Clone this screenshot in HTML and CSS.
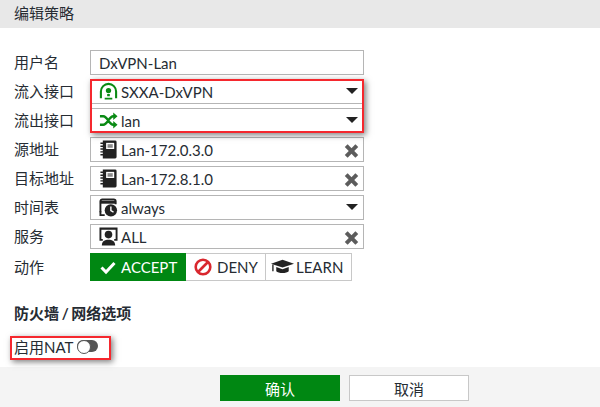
FILE: index.html
```html
<!DOCTYPE html>
<html lang="zh">
<head>
<meta charset="utf-8">
<title>编辑策略</title>
<link rel="stylesheet" href="styles.css">
</head>
<body>
<div class="page">
  <header class="title">编辑策略</header>
  <main class="body">
    <div class="form">
      <div class="row">
        <label class="lbl">用户名</label>
        <div class="field"><span class="val plain">DxVPN-Lan</span></div>
      </div>
      <div class="row">
        <label class="lbl">流入接口</label>
        <div class="field">
          <svg class="ico" viewBox="0 0 20 20"><path d="M2 17V10a8 8 0 0 1 16 0v7" fill="none" stroke="#0a8a14" stroke-width="2.200"/><circle cx="10" cy="9" r="2.800" fill="#0a8a14"/><path d="M8.600 12.500h2.800v2.600H8.600zM6 16.500h8v2H6z" fill="#0a8a14"/></svg>
          <span class="val">SXXA-DxVPN</span><span class="caret"></span>
        </div>
      </div>
      <div class="row">
        <label class="lbl">流出接口</label>
        <div class="field">
          <svg class="ico" viewBox="0 0 20 20"><path d="M1 5.500h3.500c4.500 0 6 9 10.500 9H16M1 14.500h3.500c4.500 0 6-9 10.500-9H16" fill="none" stroke="#0a8a14" stroke-width="2.600"/><path d="M15 1.500l4.500 4-4.500 4zM15 10.500l4.500 4-4.500 4z" fill="#0a8a14"/></svg>
          <span class="val">lan</span><span class="caret"></span>
        </div>
      </div>
      <div class="row">
        <label class="lbl">源地址</label>
        <div class="field">
          <svg class="ico" viewBox="0 0 20 20"><path d="M4 .5h13A1.500 1.500 0 0 1 18.500 2v16a1.500 1.500 0 0 1-1.500 1.500H4z" fill="#222"/><path d="M1.500 3.500h3.500M1.500 6.500h3.500M1.500 9.500h3.500M1.500 12.500h3.500M1.500 15.500h3.500" stroke="#222" stroke-width="1.500"/><path d="M7.500 3h8.500v6.500H7.500z" fill="#fff"/><path d="M9 5.300h5.500M9 7.300h5.500" stroke="#222"/></svg>
          <span class="val">Lan-172.0.3.0</span><span class="x"></span>
        </div>
      </div>
      <div class="row">
        <label class="lbl">目标地址</label>
        <div class="field">
          <svg class="ico" viewBox="0 0 20 20"><path d="M4 .5h13A1.500 1.500 0 0 1 18.500 2v16a1.500 1.500 0 0 1-1.500 1.500H4z" fill="#222"/><path d="M1.500 3.500h3.500M1.500 6.500h3.500M1.500 9.500h3.500M1.500 12.500h3.500M1.500 15.500h3.500" stroke="#222" stroke-width="1.500"/><path d="M7.500 3h8.500v6.500H7.500z" fill="#fff"/><path d="M9 5.300h5.500M9 7.300h5.500" stroke="#222"/></svg>
          <span class="val">Lan-172.8.1.0</span><span class="x"></span>
        </div>
      </div>
      <div class="row">
        <label class="lbl">时间表</label>
        <div class="field">
          <svg class="ico" viewBox="0 0 20 20"><path d="M1.500 15V3.500a2 2 0 0 1 2-2h12a2 2 0 0 1 2 2v3" fill="none" stroke="#222" stroke-width="2"/><path d="M1 3h17v3H1z" fill="#222"/><path d="M1.500 14v4H6" fill="none" stroke="#222" stroke-width="2"/><circle cx="12.500" cy="13" r="6.500" fill="#222"/><path d="M12.500 9v4.300l2.800 1.500" fill="none" stroke="#fff" stroke-width="1.500"/></svg>
          <span class="val">always</span><span class="caret"></span>
        </div>
      </div>
      <div class="row">
        <label class="lbl">服务</label>
        <div class="field">
          <svg class="ico" viewBox="0 0 20 20"><path d="M.5 .5h19v14h-3.500v-2h1.500V3h-15v9.500H4v2H.5z" fill="#222"/><circle cx="10" cy="8" r="4" fill="#222"/><path d="M3 19.500c0-4.500 3-6 7-6s7 1.500 7 6z" fill="#222"/></svg>
          <span class="val">ALL</span><span class="x"></span>
        </div>
      </div>
      <div class="row action-row">
        <label class="lbl">动作</label>
        <div class="seg">
          <span class="opt on">
            <svg class="mini" viewBox="0 0 16 16"><path d="M1.500 8.500l4.500 4.500 8.500-9" fill="none" stroke="#fff" stroke-width="3"/></svg>ACCEPT</span>
          <span class="opt deny">
            <svg class="mini" viewBox="0 0 16 16"><circle cx="8" cy="8" r="6.500" fill="none" stroke="#d9272e" stroke-width="2.300"/><path d="M3.800 12.200l8.400-8.400" stroke="#d9272e" stroke-width="2.300"/></svg>DENY</span>
          <span class="opt learn">
            <svg class="cap" viewBox="0 0 24 16"><path d="M0 4.500L12 .5l12 4-12 4z" fill="#222"/><path d="M5.500 8v4.500c2 2.500 11 2.500 13 0V8l-6.500 2.300z" fill="#222"/><path d="M2 5.500v7" stroke="#222" stroke-width="1.400"/></svg>LEARN</span>
        </div>
      </div>
    </div>
    <h2 class="section">防火墙 / 网络选项</h2>
    <div class="nat">
      <span>启用NAT</span><span class="toggle"></span>
    </div>
  </main>
  <footer class="foot">
    <button class="btn primary">确认</button>
    <button class="btn">取消</button>
  </footer>
  <div class="mark mark-if"></div>
  <div class="mark mark-nat"></div>
</div>
</body>
</html>
```
FILE: styles.css
```css
* { box-sizing: border-box; }
html, body { margin: 0; padding: 0; }
body {
  font-family: Lato, "Noto Sans CJK SC", sans-serif;
  font-size: 15px;
  color: #262c33;
  background: #fff;
}
.page { position: relative; width: 600px; height: 407px; overflow: hidden; display: flex; flex-direction: column; }
.title { height: 28px; background: #e8e8e8; padding-left: 14px; line-height: 27px; flex: none; }
.body { flex: 1; padding: 22px 0 0 14px; }
.form { display: flex; flex-direction: column; gap: 4px; }
.row { display: flex; align-items: center; height: 25px; }
.lbl { width: 76px; flex: none; line-height: 25px; height: 25px; }
.field {
  width: 274px; height: 25px; border: 1px solid #b5b5b5; background: #fff;
  display: flex; align-items: center; padding-left: 8px; position: relative;
}
.val { line-height: 22px; flex: 1; margin-left: 3px; }
.val.plain { margin-left: 0; }
.ico { width: 19px; height: 19px; flex: none; }
.caret {
  width: 0; height: 0; margin-right: 5px; margin-top: -1px;
  border-left: 6.500px solid transparent; border-right: 6.500px solid transparent; border-top: 6px solid #222;
}
.x { width: 13px; height: 13px; margin-right: 5px; margin-top: 3px; position: relative; }
.x::before, .x::after {
  content: ""; position: absolute; left: -1px; top: 4.500px; width: 15px; height: 4px; background: #5c5c5c;
}
.x::before { transform: rotate(45deg); }
.x::after { transform: rotate(-45deg); }
.action-row { height: 28px; }
.seg { display: flex; height: 28px; }
.opt {
  display: flex; align-items: center; height: 28px;
  border: 1px solid #c8c8c8; border-left: 0; background: #fff;
}
.on { width: 96px; background: #008712; color: #fff; border: 0; padding-left: 10px; }
.deny { width: 80px; padding-left: 8px; }
.deny .mini { width: 18px; height: 18px; margin-right: 5px; }
.learn { width: 86px; padding-left: 5px; }
.mini { width: 16px; height: 16px; margin-right: 5px; flex: none; }
.cap { width: 23px; height: 16px; margin-right: 2px; flex: none; }
.section { margin: 22px 0 0; font-size: 15px; font-weight: 700; line-height: 20px; word-spacing: -1px; }
.nat { display: flex; align-items: center; margin-top: 13px; height: 20px; }
.toggle {
  width: 21px; height: 12px; border-radius: 6px; background: #555; margin-left: 4px; position: relative;
}
.toggle::before {
  content: ""; position: absolute; left: 0; top: 0; width: 12px; height: 12px; border-radius: 50%;
  background: #fff; border: 1.500px solid #555;
}
.foot {
  height: 40px; flex: none; background: #f4f4f4; display: flex; justify-content: flex-start;
  gap: 9px; padding: 8px 0 0 220px;
}
.btn {
  width: 120px; height: 26px; border: 1px solid #c8c8c8; background: #fff; font: inherit; color: #262c33; padding: 0;
}
.primary { background: #008712; border-color: #008712; color: #fff; }
.mark { position: absolute; border: 2px solid #f5282e; box-shadow: 2px 2px 6px rgba(0,0,0,.5); pointer-events: none; }
.mark-if { left: 90px; top: 79px; width: 274px; height: 54px; }
.mark-nat { left: 10px; top: 336px; width: 101px; height: 24px; }
```
